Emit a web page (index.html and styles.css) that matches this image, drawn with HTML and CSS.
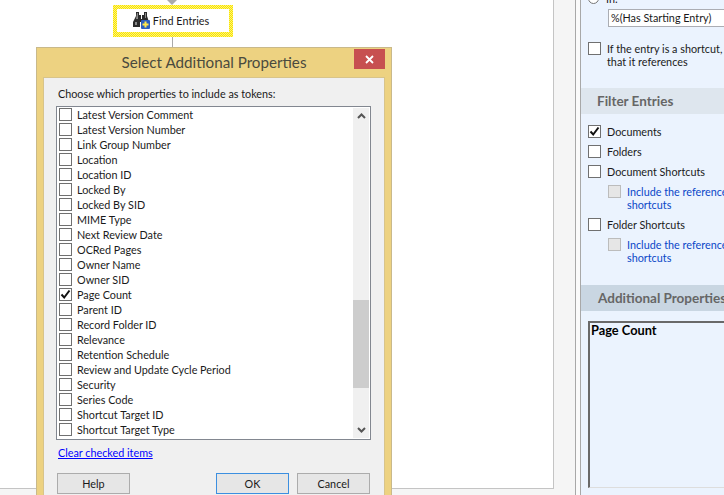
FILE: index.html
```html
<!DOCTYPE html>
<html lang="en">
<head>
    <meta charset="UTF-8">
    <title>Select Additional Properties</title>
    <link rel="stylesheet" href="styles.css">
</head>
<body>
    <div class="canvas">
        <div class="page"></div>
        <div class="arrow"></div>
        <div class="connector"></div>
        <div class="node">
            <div class="node-inner">
                <svg class="node-icon" width="17" height="17" viewBox="0 0 17 17">
                    <path d="M3 0h3v3h2v4h1V3h2V0h3v4l2 6v5h-6v-5H7v5H0v-5l3-6z" fill="#2b2b2b"/>
                    <path d="M4 1h1v6H3zM12 1h1v5h-1zM2 10h2v3H2z" fill="#8a8a8a"/>
                    <rect x="8" y="8" width="9" height="9" rx="1" fill="#2a5fc0"/>
                    <path d="M12.500 9.500v6M9.500 12.500h6" stroke="#ffe84a" stroke-width="2"/>
                </svg>
                <span>Find Entries</span>
            </div>
        </div>

        <div class="dialog">
            <div class="dialog-title">Select Additional Properties</div>
            <div class="close-btn">
                <svg width="9" height="9" viewBox="0 0 9 9"><path d="M1 1l7 7M8 1L1 8" stroke="#fff" stroke-width="1.8"/></svg>
            </div>
            <div class="dialog-body">
                <div class="prompt">Choose which properties to include as tokens:</div>
                <div class="listbox">
                    <div class="items">
                        <div class="item"><span class="box"></span>Latest Version Comment</div>
                        <div class="item"><span class="box"></span>Latest Version Number</div>
                        <div class="item"><span class="box"></span>Link Group Number</div>
                        <div class="item"><span class="box"></span>Location</div>
                        <div class="item"><span class="box"></span>Location ID</div>
                        <div class="item"><span class="box"></span>Locked By</div>
                        <div class="item"><span class="box"></span>Locked By SID</div>
                        <div class="item"><span class="box"></span>MIME Type</div>
                        <div class="item"><span class="box"></span>Next Review Date</div>
                        <div class="item"><span class="box"></span>OCRed Pages</div>
                        <div class="item"><span class="box"></span>Owner Name</div>
                        <div class="item"><span class="box"></span>Owner SID</div>
                        <div class="item"><span class="box"><svg class="tick" viewBox="0 0 11 11"><path d="M1.500 5.500l2.700 3L9.500 1.500" fill="none" stroke="#111" stroke-width="2"/></svg></span>Page Count</div>
                        <div class="item"><span class="box"></span>Parent ID</div>
                        <div class="item"><span class="box"></span>Record Folder ID</div>
                        <div class="item"><span class="box"></span>Relevance</div>
                        <div class="item"><span class="box"></span>Retention Schedule</div>
                        <div class="item"><span class="box"></span>Review and Update Cycle Period</div>
                        <div class="item"><span class="box"></span>Security</div>
                        <div class="item"><span class="box"></span>Series Code</div>
                        <div class="item"><span class="box"></span>Shortcut Target ID</div>
                        <div class="item"><span class="box"></span>Shortcut Target Type</div>
                    </div>
                    <div class="scrollbar">
                        <svg width="9" height="6" viewBox="0 0 9 6"><path d="M1 5l3.500-3.500L8 5" fill="none" stroke="#555" stroke-width="2"/></svg>
                        <div class="track"><div class="thumb"></div></div>
                        <svg width="9" height="6" viewBox="0 0 9 6"><path d="M1 1l3.500 3.500L8 1" fill="none" stroke="#555" stroke-width="2"/></svg>
                    </div>
                </div>
                <a class="clear-link" href="#">Clear checked items</a>
                <div class="buttons">
                    <button class="btn">Help</button>
                    <div class="buttons-right">
                        <button class="btn btn-default">OK</button>
                        <button class="btn">Cancel</button>
                    </div>
                </div>
            </div>
        </div>
    </div>

    <div class="panel">
        <div class="panel-inner">
            <div class="radio-row"><span class="radio"></span>In:</div>
            <div class="text-input">%(Has Starting Entry)</div>
            <div class="check-row wrap"><span class="box"></span><span class="wrap-text">If the entry is a shortcut, use the entry<br>that it references</span></div>

            <div class="section-head section-filter">Filter Entries</div>
            <div class="check-row"><span class="box"><svg class="tick" viewBox="0 0 11 11"><path d="M1.500 5.500l2.700 3L9.500 1.500" fill="none" stroke="#111" stroke-width="2"/></svg></span>Documents</div>
            <div class="check-row"><span class="box"></span>Folders</div>
            <div class="check-row"><span class="box"></span>Document Shortcuts</div>
            <div class="check-row sub"><span class="box box-off"></span><span class="wrap-text">Include the referenced documents of<br>shortcuts</span></div>
            <div class="check-row"><span class="box"></span>Folder Shortcuts</div>
            <div class="check-row sub"><span class="box box-off"></span><span class="wrap-text">Include the referenced folders of<br>shortcuts</span></div>

            <div class="section-head section-props">Additional Properties</div>
            <div class="props-box">Page Count</div>
        </div>
    </div>
</body>
</html>
```

FILE: styles.css
```css
html, body {
    margin: 0;
    height: 100%;
    overflow: hidden;
}
body {
    display: flex;
    width: 724px;
    height: 495px;
    font-family: Lato, Arial, sans-serif;
    font-size: 10.8px;
    color: #1a1a1a;
    background: #fff;
}
.canvas {
    position: relative;
    width: 575px;
    flex: none;
    background: #f5f5f5;
}
.page {
    width: 554px;
    height: 489px;
    box-sizing: border-box;
    background: #fff;
    border-right: 1px solid #c4c4c4;
    border-bottom: 1px solid #c4c4c4;
}
.arrow {
    position: absolute;
    left: 167px;
    top: 0;
    border-left: 5px solid transparent;
    border-right: 5px solid transparent;
    border-top: 5px solid #aaa;
}
.connector {
    position: absolute;
    left: 172px;
    top: 37px;
    width: 1px;
    height: 10px;
    background: #aaa;
}
.node {
    position: absolute;
    left: 113px;
    top: 5px;
    width: 120px;
    height: 32px;
    padding: 4px 4px 5px;
    box-sizing: border-box;
    background: repeating-conic-gradient(#f7e400 0 25%, #fff27a 0 50%) 0 0 / 2px 2px;
}
.node-inner {
    height: 100%;
    background: #fff;
    display: flex;
    align-items: center;
    justify-content: center;
    gap: 3px;
    padding-right: 4px;
}
.dialog {
    position: absolute;
    left: 36px;
    top: 47px;
    width: 356px;
    box-sizing: border-box;
    height: 460px;
    padding: 0 6px;
    background: #edd281;
    border: 1px solid #c9b98a;
}
.dialog-title {
    height: 29px;
    line-height: 29px;
    font-size: 15.200px;
    text-align: center;
    color: #4a4a3e;
}
.close-btn {
    position: absolute;
    right: 6px;
    top: 1px;
    width: 31px;
    height: 20px;
    background: #c75050;
    display: flex;
    align-items: center;
    justify-content: center;
}
.dialog-body {
    background: #f0f0f0;
    border: 1px solid #d8c48a;
    height: 420px;
    padding: 0 14px 0 12px;
}
.prompt {
    height: 28px;
    line-height: 31px;
    padding-left: 2px;
}
.listbox {
    display: flex;
    width: 315px;
    height: 334px;
    box-sizing: border-box;
    background: #fff;
    border: 1px solid #828790;
    overflow: hidden;
}
.items {
    flex: 1;
    padding-left: 2px;
}
.item {
    display: flex;
    align-items: center;
    height: 15px;
    white-space: nowrap;
}
.item .box {
    margin-right: 5px;
}
.box {
    display: flex;
    align-items: center;
    justify-content: center;
    flex: none;
    width: 13px;
    height: 13px;
    box-sizing: border-box;
    background: #fff;
    border: 1px solid #707070;
}
.box-off {
    background: #e6e6e6;
    border-color: #bcbcbc;
}
.tick {
    width: 11px;
    height: 11px;
}
.scrollbar {
    width: 16px;
    margin: 1px 1px 1px 0;
    background: #f0f0f0;
    display: flex;
    flex-direction: column;
    align-items: center;
    padding: 5px 0;
    box-sizing: border-box;
}
.track {
    flex: 1;
    width: 100%;
    padding-top: 181px;
    box-sizing: border-box;
}
.thumb {
    height: 88px;
    background: #cdcdcd;
}
.clear-link {
    display: block;
    height: 33px;
    line-height: 25px;
    padding-left: 2px;
    color: #0000ff;
}
.buttons {
    display: flex;
    justify-content: space-between;
    width: 313px;
    margin-left: 1px;
}
.buttons-right {
    display: flex;
    gap: 8px;
}
.btn {
    width: 73px;
    height: 21px;
    padding: 0;
    box-sizing: border-box;
    font: inherit;
    color: #1a1a1a;
    background: #e6e6e6;
    border: 1px solid #acacac;
}
.btn-default {
    border-color: #3c8fe0;
}
.panel {
    flex: 1;
    box-sizing: border-box;
    border-left: 1px solid #a8a8a8;
    padding-left: 4px;
    background: #fafafa;
    overflow: hidden;
}
.panel-inner {
    width: 240px;
    box-sizing: border-box;
    background: #ebf3fe;
    border-left: 1px solid #a8a8a8;
    margin-top: -9px;
    height: 510px;
    padding-left: 7px;
}
.radio-row {
    display: flex;
    align-items: center;
    gap: 7px;
    height: 14px;
}
.radio {
    width: 11px;
    height: 11px;
    box-sizing: border-box;
    border: 1px solid #777;
    border-radius: 50%;
    background: #fff;
}
.text-input {
    margin: 4px 0 0 20px;
    width: 200px;
    height: 18px;
    line-height: 16px;
    box-sizing: border-box;
    padding-left: 2px;
    background: #fff;
    border: 1px solid #abadb3;
}
.check-row {
    display: flex;
    align-items: center;
    gap: 6px;
    height: 20px;
    white-space: nowrap;
}
.wrap {
    align-items: flex-start;
    height: 28px;
    margin-top: 15px;
    line-height: 13px;
}
.sub {
    align-items: flex-start;
    height: 33px;
    box-sizing: border-box;
    padding-top: 4px;
    margin-left: 20px;
    line-height: 13px;
    color: #0a47c8;
}
.section-head {
    height: 26px;
    line-height: 27px;
    margin-left: -7px;
    padding-left: 17px;
    font-weight: 700;
    font-size: 13.500px;
    color: #666;
}
.section-filter {
    margin-top: 18px;
    margin-bottom: 7px;
    padding-left: 16px;
    background: #dee6ee;
}
.section-props {
    margin-top: 18px;
    margin-bottom: 10px;
    background: #c9d6e2;
}
.props-box {
    height: 167px;
    box-sizing: border-box;
    padding-left: 1px;
    border: 2px solid #696969;
    border-right: none;
    border-bottom: 1px solid #ddd;
    font-size: 12.800px;
    font-weight: 700;
    color: #000;
    line-height: 15px;
}
```
